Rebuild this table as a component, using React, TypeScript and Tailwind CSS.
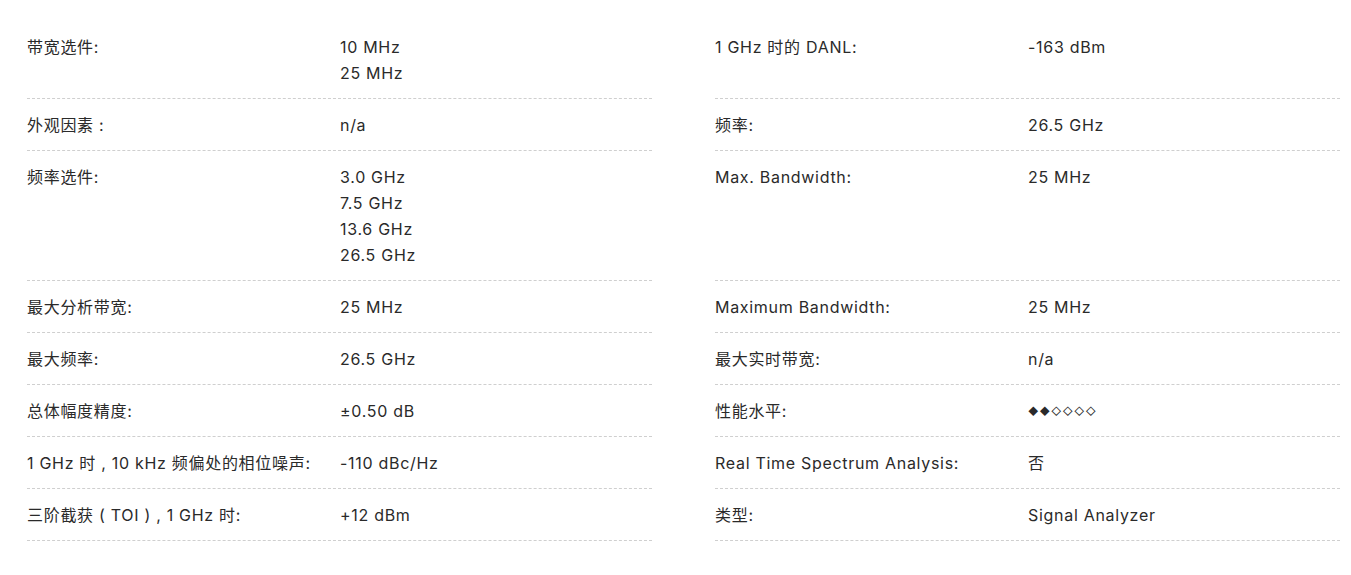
const LEFT: [string, string[]][] = [
  ["带宽选件:", ["10 MHz", "25 MHz"]],
  ["外观因素 :", ["n/a"]],
  ["频率选件:", ["3.0 GHz", "7.5 GHz", "13.6 GHz", "26.5 GHz"]],
  ["最大分析带宽:", ["25 MHz"]],
  ["最大频率:", ["26.5 GHz"]],
  ["总体幅度精度:", ["±0.50 dB"]],
  ["1 GHz 时 , 10 kHz 频偏处的相位噪声:", ["-110 dBc/Hz"]],
  ["三阶截获 ( TOI ) , 1 GHz 时:", ["+12 dBm"]],
];

const RIGHT: [string, string[]][] = [
  ["1 GHz 时的 DANL:", ["-163 dBm"]],
  ["频率:", ["26.5 GHz"]],
  ["Max. Bandwidth:", ["25 MHz"]],
  ["Maximum Bandwidth:", ["25 MHz"]],
  ["最大实时带宽:", ["n/a"]],
  ["性能水平:", ["◆◆◇◇◇◇"]],
  ["Real Time Spectrum Analysis:", ["否"]],
  ["类型:", ["Signal Analyzer"]],
];

function SpecRow({ label, values }: { label: string; values: string[] }) {
  const isLevel = values[0] === "◆◆◇◇◇◇";
  return (
    <div className="flex border-b border-dashed border-[#cfcfcf] pt-[13px] pb-[12px] leading-[26px]">
      <div className="w-[313px] shrink-0 whitespace-pre">{label}</div>
      <div className="flex-1">
        {values.map((v, i) =>
          isLevel ? (
            <div key={i} className="text-[10px] tracking-[1px]">
              {v}
            </div>
          ) : (
            <div key={i}>{v}</div>
          )
        )}
      </div>
    </div>
  );
}

export default function App() {
  const rows = LEFT.map((l, i) => [l, RIGHT[i]] as const);
  return (
    <div
      className="min-h-screen bg-white text-[16px] tracking-[0.7px] text-[#2a2a2a]"
      style={{ fontFamily: 'Inter, "Noto Sans CJK SC", sans-serif' }}
    >
      <div className="pl-[27px] pt-[21px] w-[1340px]">
        <div className="grid grid-cols-2 gap-x-[63px]">
          {rows.map(([l, r], i) => (
            <div key={i} className="contents">
              <SpecRow label={l[0]} values={l[1]} />
              <SpecRow label={r[0]} values={r[1]} />
            </div>
          ))}
        </div>
      </div>
    </div>
  );
}
